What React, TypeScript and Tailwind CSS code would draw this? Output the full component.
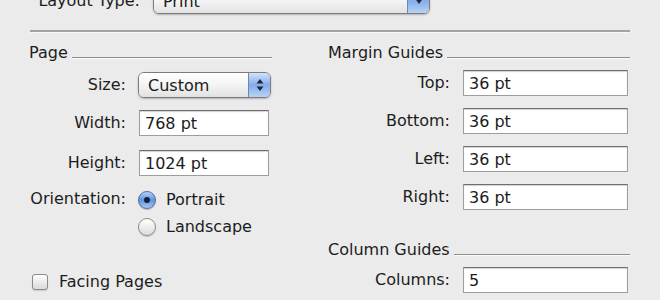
import React from "react";

const font = "font-['DejaVu_Sans',sans-serif]";

function Field({ value, w }: { value: string; w: string }) {
  return (
    <div
      className={`${w} h-[26px] bg-white border border-[#9d9d9d] border-t-[#6f6f6f] shadow-[inset_0_1px_1px_rgba(0,0,0,0.18)] flex items-center pl-[5px] pt-[2px] text-[16px] text-[#1c1c1c]`}
    >
      {value}
    </div>
  );
}

function UpDown() {
  return (
    <svg width="8" height="14" viewBox="0 0 8 14">
      <path d="M4 1 L7.5 5.5 L0.5 5.5 Z" fill="#1b2741" />
      <path d="M4 13 L7.5 8.5 L0.5 8.5 Z" fill="#1b2741" />
    </svg>
  );
}

function Down() {
  return (
    <svg width="8" height="8" viewBox="0 0 8 8">
      <path d="M4 7 L7.5 2 L0.5 2 Z" fill="#1b2741" />
    </svg>
  );
}

function Popup({ label, w, single }: { label: string; w: string; single?: boolean }) {
  return (
    <div
      className={`${w} h-[26px] rounded-[6px] border border-[#7c7c7c] shadow-[0_1px_2px_rgba(0,0,0,0.25)] flex overflow-hidden`}
    >
      <div className="flex-1 bg-gradient-to-b from-[#ffffff] via-[#f4f4f4] to-[#e2e2e2] flex items-center pl-[9px] pt-[1px] text-[16px] text-[#1a1a1a]">
        {label}
      </div>
      <div className="w-[22px] border-l border-[#6d87b3] bg-gradient-to-b from-[#d2e2f7] via-[#84acea] to-[#b9d3f4] flex items-center justify-center">
        {single ? <Down /> : <UpDown />}
      </div>
    </div>
  );
}

function Heading({ text }: { text: string }) {
  return (
    <div className="flex items-end h-[19px] leading-[19px]">
      <span className="text-[16px] text-[#1c1c1c] whitespace-nowrap">{text}</span>
      <div className="flex-1 h-px bg-[#8e8e8e] mb-[4px] ml-[4px] shadow-[0_1px_0_#fafafa]" />
    </div>
  );
}

function Row({ label, labelW, gap, children }: { label: string; labelW: string; gap: string; children: React.ReactNode }) {
  return (
    <div className={`flex items-center ${gap}`}>
      <div className={`${labelW} text-right text-[16px] text-[#1c1c1c] leading-[19px] mt-[-2px]`}>{label}</div>
      {children}
    </div>
  );
}

function Radio({ on }: { on?: boolean }) {
  return on ? (
    <div className="w-[18px] h-[18px] rounded-full border border-[#4c6fa8] bg-gradient-to-b from-[#b9d2f3] via-[#5d93de] to-[#a8caf3] shadow-[0_1px_1px_rgba(0,0,0,0.25)] flex items-center justify-center">
      <div className="w-[6px] h-[6px] rounded-full bg-[#15203a]" />
    </div>
  ) : (
    <div className="w-[18px] h-[18px] rounded-full border border-[#8c8c8c] bg-gradient-to-b from-[#ffffff] to-[#dcdcdc] shadow-[0_1px_1px_rgba(0,0,0,0.2)]" />
  );
}

export default function App() {
  return (
    <div className={`w-[660px] h-[300px] overflow-hidden bg-[#ebebeb] ${font} text-[#1c1c1c]`}>
      {/* Top row, cut off */}
      <div className="flex items-center mt-[-12px] h-[26px]">
        <div className="w-[140px] text-right text-[16px] leading-[19px] mt-[-2px]">Layout Type:</div>
        <div className="ml-[13px]">
          <Popup label="Print" w="w-[277px]" single />
        </div>
      </div>
      {/* separator */}
      <div className="ml-[30px] w-[600px] h-[2px] bg-[#a3a3a3] mt-[16px] shadow-[0_1px_0_#f7f7f7]" />

      <div className="flex">
        {/* Left column */}
        <div className="ml-[29px] w-[243px] flex flex-col">
          <div className="mt-[11px]">
            <Heading text="Page" />
          </div>
          <div className="mt-[10px]">
            <Row label="Size:" labelW="w-[97px]" gap="gap-[12px]">
              <Popup label="Custom" w="w-[133px]" />
            </Row>
          </div>
          <div className="mt-[12px]">
            <Row label="Width:" labelW="w-[97px]" gap="gap-[13px]">
              <Field value="768 pt" w="w-[130px]" />
            </Row>
          </div>
          <div className="mt-[14px]">
            <Row label="Height:" labelW="w-[97px]" gap="gap-[13px]">
              <Field value="1024 pt" w="w-[130px]" />
            </Row>
          </div>
          <div className="mt-[14px] flex gap-[12px]">
            <div className="w-[97px] text-right text-[16px] leading-[19px] mt-[-1px]">Orientation:</div>
            <div className="flex flex-col gap-[8px]">
              <div className="flex items-center gap-[10px] text-[16px] leading-[19px]">
                <Radio on />
                <span>Portrait</span>
              </div>
              <div className="flex items-center gap-[10px] text-[16px] leading-[19px]">
                <Radio />
                <span>Landscape</span>
              </div>
            </div>
          </div>
          <div className="mt-[37px] ml-[3px] flex items-center gap-[11px] text-[16px] leading-[19px]">
            <div className="w-[16px] h-[16px] rounded-[3px] border border-[#8a8a8a] bg-gradient-to-b from-[#ffffff] to-[#dadada] shadow-[0_1px_1px_rgba(0,0,0,0.15)]" />
            <span className="mt-[-1px]">Facing Pages</span>
          </div>
        </div>

        {/* Right column */}
        <div className="ml-[56px] w-[302px] flex flex-col">
          <div className="mt-[11px]">
            <Heading text="Margin Guides" />
          </div>
          <div className="mt-[8px] flex flex-col gap-[12px]">
            <Row label="Top:" labelW="w-[122px]" gap="gap-[13px]">
              <Field value="36 pt" w="w-[165px]" />
            </Row>
            <Row label="Bottom:" labelW="w-[122px]" gap="gap-[13px]">
              <Field value="36 pt" w="w-[165px]" />
            </Row>
            <Row label="Left:" labelW="w-[122px]" gap="gap-[13px]">
              <Field value="36 pt" w="w-[165px]" />
            </Row>
            <Row label="Right:" labelW="w-[122px]" gap="gap-[13px]">
              <Field value="36 pt" w="w-[165px]" />
            </Row>
          </div>
          <div className="mt-[30px]">
            <Heading text="Column Guides" />
          </div>
          <div className="mt-[8px]">
            <Row label="Columns:" labelW="w-[122px]" gap="gap-[13px]">
              <Field value="5" w="w-[165px]" />
            </Row>
          </div>
        </div>
      </div>
    </div>
  );
}
